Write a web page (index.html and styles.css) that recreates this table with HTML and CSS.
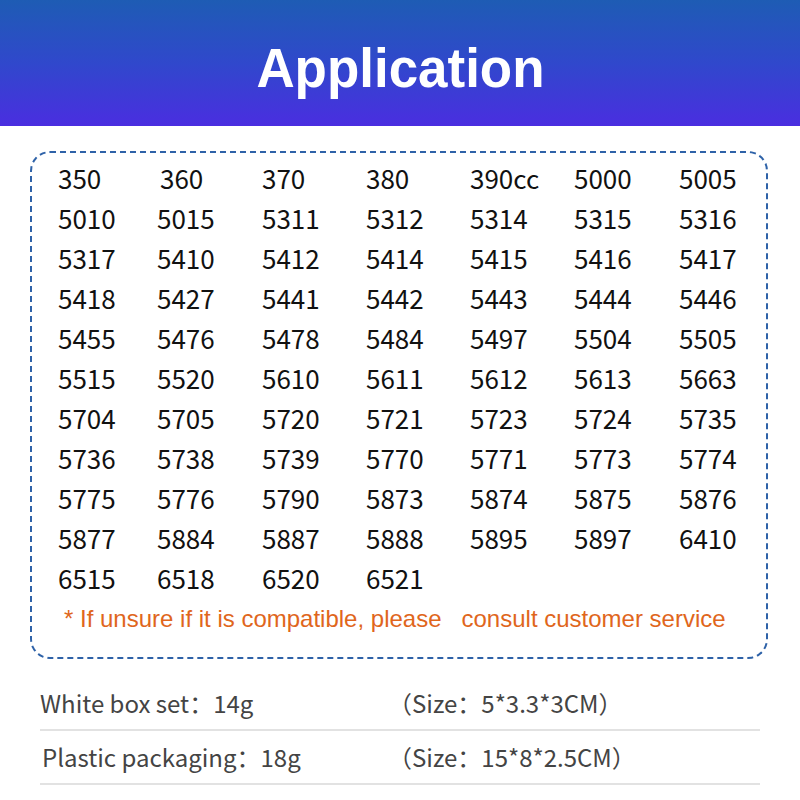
FILE: index.html
```html
<!DOCTYPE html>
<html>
<head>
<meta charset="utf-8">
<link rel="stylesheet" href="styles.css">
</head>
<body>
<header class="banner"><h1 class="title">Application</h1></header>
<section class="models">
  <div class="grid">
    <span>350</span><span class="s">360</span><span>370</span><span>380</span><span>390cc</span><span>5000</span><span>5005</span>
    <span>5010</span><span>5015</span><span>5311</span><span>5312</span><span>5314</span><span>5315</span><span>5316</span>
    <span>5317</span><span>5410</span><span>5412</span><span>5414</span><span>5415</span><span>5416</span><span>5417</span>
    <span>5418</span><span>5427</span><span>5441</span><span>5442</span><span>5443</span><span>5444</span><span>5446</span>
    <span>5455</span><span>5476</span><span>5478</span><span>5484</span><span>5497</span><span>5504</span><span>5505</span>
    <span>5515</span><span>5520</span><span>5610</span><span>5611</span><span>5612</span><span>5613</span><span>5663</span>
    <span>5704</span><span>5705</span><span>5720</span><span>5721</span><span>5723</span><span>5724</span><span>5735</span>
    <span>5736</span><span>5738</span><span>5739</span><span>5770</span><span>5771</span><span>5773</span><span>5774</span>
    <span>5775</span><span>5776</span><span>5790</span><span>5873</span><span>5874</span><span>5875</span><span>5876</span>
    <span>5877</span><span>5884</span><span>5887</span><span>5888</span><span>5895</span><span>5897</span><span>6410</span>
    <span>6515</span><span>6518</span><span>6520</span><span>6521</span>
  </div>
  <p class="note">* If unsure if it is compatible, please&nbsp;&nbsp; consult customer service</p>
</section>
<section class="specs">
  <div class="row"><span class="label">White box set：14g</span><span class="size">（Size：5*3.3*3CM）</span></div>
  <div class="row"><span class="label second">Plastic packaging：18g</span><span class="size">（Size：15*8*2.5CM）</span></div>
</section>
</body>
</html>
```
FILE: styles.css
```css
html, body { margin: 0; padding: 0; background: #fff; }
body { width: 800px; height: 800px; overflow: hidden; }

.banner {
  height: 126px;
  background: linear-gradient(180deg, #1e5cb4 0%, #3048cc 50%, #4a2ee0 100%);
  display: flex;
  align-items: center;
  justify-content: center;
}
.title {
  margin: 0;
  color: #fff;
  font-family: "Liberation Sans", Arial, sans-serif;
  font-weight: bold;
  font-size: 56px;
  line-height: 1;
  transform: scaleX(0.945);
  padding-top: 10px;
}

.models {
  margin: 25px 32px 0 30px;
  height: 508px;
  box-sizing: border-box;
  border: 2px dashed #2e62a8;
  border-radius: 20px;
  padding: 5px 0 0 26px;
}
.grid {
  display: grid;
  grid-template-columns: 99px 105px 104px 104px 104px 105px auto;
  font-family: "Noto Sans CJK SC", "Noto Sans", sans-serif;
  font-size: 26px;
  line-height: 40px;
  color: #111;
}
.grid .s { padding-left: 3px; }
.note {
  margin: 0;
  padding: 1px 0 0 6px;
  font-family: "Liberation Sans", Arial, sans-serif;
  font-size: 24px;
  line-height: 40px;
  color: #e0661c;
}

.specs {
  margin: 18px 40px 0 40px;
}
.row {
  display: flex;
  height: 50px;
  padding-bottom: 2px;
  align-items: center;
  border-bottom: 2px solid #e2e2e2;
  font-family: "Noto Sans CJK SC", "Noto Sans", sans-serif;
  font-size: 24px;
  color: #444;
}
.label { width: 348px; }
.label.second { padding-left: 2px; width: 346px; }
```
